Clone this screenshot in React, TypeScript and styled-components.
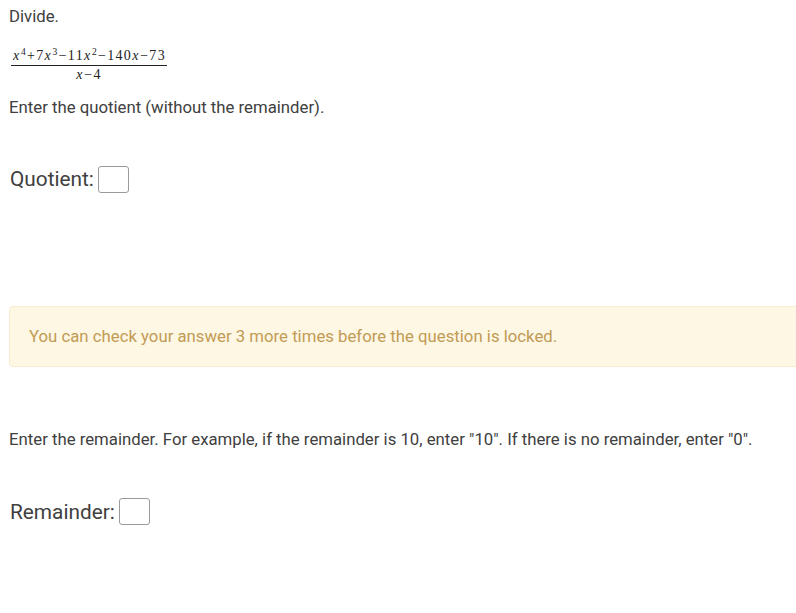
import React from "react";
import styled, { createGlobalStyle } from "styled-components";

const Global = createGlobalStyle`
  html, body { margin: 0; padding: 0; background: #fff; overflow: hidden; }
  body { font-family: Roboto, "Noto Sans", sans-serif; color: #404040; }
`;

const Page = styled.div`
  width: 820px;
  padding: 5px 0 0 9px;
  box-sizing: border-box;
`;

const Para = styled.p<{ $mt?: number }>`
  margin: ${(p) => p.$mt ?? 0}px 0 0 0;
  font-size: 16.75px;
  line-height: 23.5px;
`;

const Fraction = styled.div`
  display: flex;
  flex-direction: column;
  align-items: center;
  width: max-content;
  margin-top: 18px;
  margin-left: 2px;
  font-family: "Liberation Serif", "DejaVu Serif", serif;
  font-size: 14px;
  letter-spacing: 1.3px;
  color: #222;
`;

const Num = styled.span`
  padding: 0 1px 1px 2px;
  border-bottom: 1px solid #222;
  line-height: 17px;
  white-space: nowrap;
`;

const Den = styled.span`
  line-height: 17px;
  white-space: nowrap;
`;

const V = styled.i`
  font-style: italic;
  margin-right: 0.5px;
`;

const Sup = styled.sup`
  font-size: 9.5px;
  vertical-align: 5px;
  line-height: 0;
`;

const AnswerRow = styled.div<{ $mt: number }>`
  display: flex;
  align-items: center;
  gap: 4px;
  height: 28px;
  margin-top: ${(p) => p.$mt}px;
  margin-left: 1px;
  font-size: 20.8px;
  color: #404040;
`;

const Box = styled.span`
  display: inline-block;
  width: 31px;
  height: 27px;
  border: 1px solid #9a9a9a;
  border-radius: 3px;
  box-sizing: border-box;
`;

const Alert = styled.div`
  margin-top: 113px;
  width: 800px;
  box-sizing: border-box;
  padding: 18px 19px;
  background: #fdf7e4;
  border: 1px solid #f8eccc;
  border-radius: 4px;
  color: #c29b54;
  font-size: 16.75px;
  line-height: 23px;
`;

export default function App() {
  return (
    <>
      <Global />
      <Page>
        <Para>Divide.</Para>
        <Fraction>
          <Num>
            <V>x</V>
            <Sup>4</Sup>+7<V>x</V>
            <Sup>3</Sup>−11<V>x</V>
            <Sup>2</Sup>−140<V>x</V>−73
          </Num>
          <Den>
            <V>x</V>−4
          </Den>
        </Fraction>
        <Para $mt={13}>Enter the quotient (without the remainder).</Para>
        <AnswerRow $mt={46}>
          <span>Quotient:</span>
          <Box />
        </AnswerRow>
        <Alert>You can check your answer 3 more times before the question is locked.</Alert>
        <Para $mt={61}>
          Enter the remainder. For example, if the remainder is 10, enter "10". If there is no remainder, enter "0".
        </Para>
        <AnswerRow $mt={46}>
          <span>Remainder:</span>
          <Box />
        </AnswerRow>
      </Page>
    </>
  );
}
